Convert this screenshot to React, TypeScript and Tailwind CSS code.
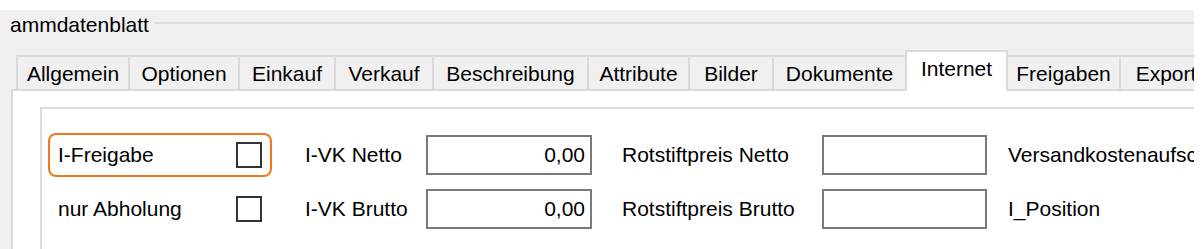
import React from "react";

type Tab = { label: string; w: number; selected?: boolean; noLeft?: boolean };

const tabs: Tab[] = [
  { label: "Allgemein", w: 112 },
  { label: "Optionen", w: 110 },
  { label: "Einkauf", w: 96 },
  { label: "Verkauf", w: 98 },
  { label: "Beschreibung", w: 155 },
  { label: "Attribute", w: 101 },
  { label: "Bilder", w: 84 },
  { label: "Dokumente", w: 133 },
  { label: "Internet", w: 103, selected: true },
  { label: "Freigaben", w: 111, noLeft: true },
  { label: "Export", w: 92 },
];

function Checkbox() {
  return <div className="w-[26px] h-[26px] border-2 border-[#333333] bg-white shrink-0" />;
}

function Field({ value, w }: { value?: string; w: number }) {
  return (
    <div
      className="h-[40px] border-2 border-[#7a7a7a] bg-white flex items-center justify-end pr-[5px] shrink-0"
      style={{ width: w }}
    >
      {value}
    </div>
  );
}

function Row({
  check,
  focused,
  l1,
  v1,
  l2,
  l3,
}: {
  check: string;
  focused?: boolean;
  l1: string;
  v1: string;
  l2: string;
  l3: string;
}) {
  return (
    <div className="flex items-center h-[44px] whitespace-nowrap">
      <div
        className={
          "w-[224px] h-[44px] border-2 rounded-[8px] flex items-center justify-between pl-[8px] pr-[8px] shrink-0 " +
          (focused ? "border-[#f5761a]" : "border-transparent")
        }
      >
        <span>{check}</span>
        <Checkbox />
      </div>
      <div className="ml-[33px] w-[121px] shrink-0">{l1}</div>
      <Field value={v1} w={166} />
      <div className="ml-[30px] w-[200px] shrink-0">{l2}</div>
      <Field w={165} />
      <div className="ml-[21px]">{l3}</div>
    </div>
  );
}

export default function App() {
  return (
    <div className="w-[1204px] h-[249px] bg-white pt-[10px] overflow-hidden font-['Liberation_Sans',Arial,sans-serif] text-[21px] leading-[24px] text-black">
      <div className="w-[1194px] h-[239px] bg-[#f0f0f0] overflow-hidden flex flex-col">
        {/* group header */}
        <div className="h-[40px] flex items-start pt-[3px] pl-[10px] shrink-0">
          <span className="whitespace-nowrap">ammdatenblatt</span>
          <div className="flex-1 h-[2px] bg-[#dcdcdc] mt-[9px] ml-[6px]" />
        </div>
        {/* tabs */}
        <div className="h-[39px] flex items-end ml-[16px] shrink-0 whitespace-nowrap">
          {tabs.map((t) =>
            t.selected ? (
              <div
                key={t.label}
                className="relative z-10 h-[41px] mb-[-2px] bg-white border-2 border-b-0 border-[#dadada] flex justify-center items-start pt-[5px] shrink-0"
                style={{ width: t.w }}
              >
                {t.label}
              </div>
            ) : (
              <div
                key={t.label}
                className={
                  "h-[34px] border-t-2 border-[#dadada] bg-[#f0f0f0] flex justify-center items-start pt-[5px] shrink-0 " +
                  (t.noLeft ? "" : "border-l-2")
                }
                style={{ width: t.w }}
              >
                {t.label}
              </div>
            )
          )}
        </div>
        {/* panel */}
        <div className="flex-1 ml-[11px] border-l-2 border-t-2 border-[#dadada] bg-white flex flex-col">
          <div className="flex-1 ml-[27px] mt-[16px] border-l-2 border-t-2 border-[#dcdcdc] pt-[24px] pl-[6px] flex flex-col gap-[10px]">
            <Row
              check="I-Freigabe"
              focused
              l1="I-VK Netto"
              v1="0,00"
              l2="Rotstiftpreis Netto"
              l3="Versandkostenaufschlag"
            />
            <Row
              check="nur Abholung"
              l1="I-VK Brutto"
              v1="0,00"
              l2="Rotstiftpreis Brutto"
              l3="I_Position"
            />
          </div>
        </div>
      </div>
    </div>
  );
}
